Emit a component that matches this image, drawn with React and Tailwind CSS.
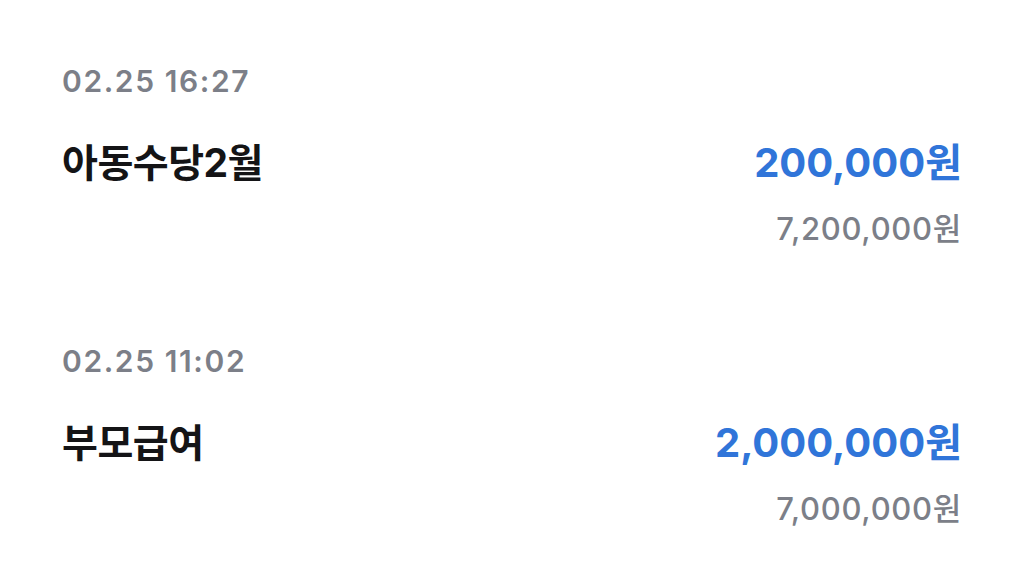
export default function App() {
  const items = [
    { date: "02.25 16:27", title: "아동수당2월", amount: "200,000원", balance: "7,200,000원" },
    { date: "02.25 11:02", title: "부모급여", amount: "2,000,000원", balance: "7,000,000원" },
  ];
  return (
    <div
      className="w-[1024px] h-[582px] bg-white overflow-hidden px-[62px] pt-[61px] flex flex-col gap-[92px]"
      style={{ fontFamily: 'Inter, "Noto Sans CJK KR", sans-serif' }}
    >
      {items.map((it) => (
        <div key={it.date} className="flex flex-col">
          <div className="h-[40px] leading-[40px] text-[30px] font-semibold text-[#7c7f88] tracking-[1.6px]">
            {it.date}
          </div>
          <div className="mt-[38px] flex justify-between items-start">
            <div className="h-[48px] leading-[48px] text-[39px] font-bold text-[#141416] tracking-[-0.5px]">
              {it.title}
            </div>
            <div className="flex flex-col items-end">
              <div className="h-[48px] leading-[48px] text-[40px] font-bold text-[#3075d9]">
                {it.amount}
              </div>
              <div className="mt-[22px] h-[40px] leading-[40px] text-[31px] font-medium text-[#7c7f88] tracking-[0.7px]">
                {it.balance}
              </div>
            </div>
          </div>
        </div>
      ))}
    </div>
  );
}
